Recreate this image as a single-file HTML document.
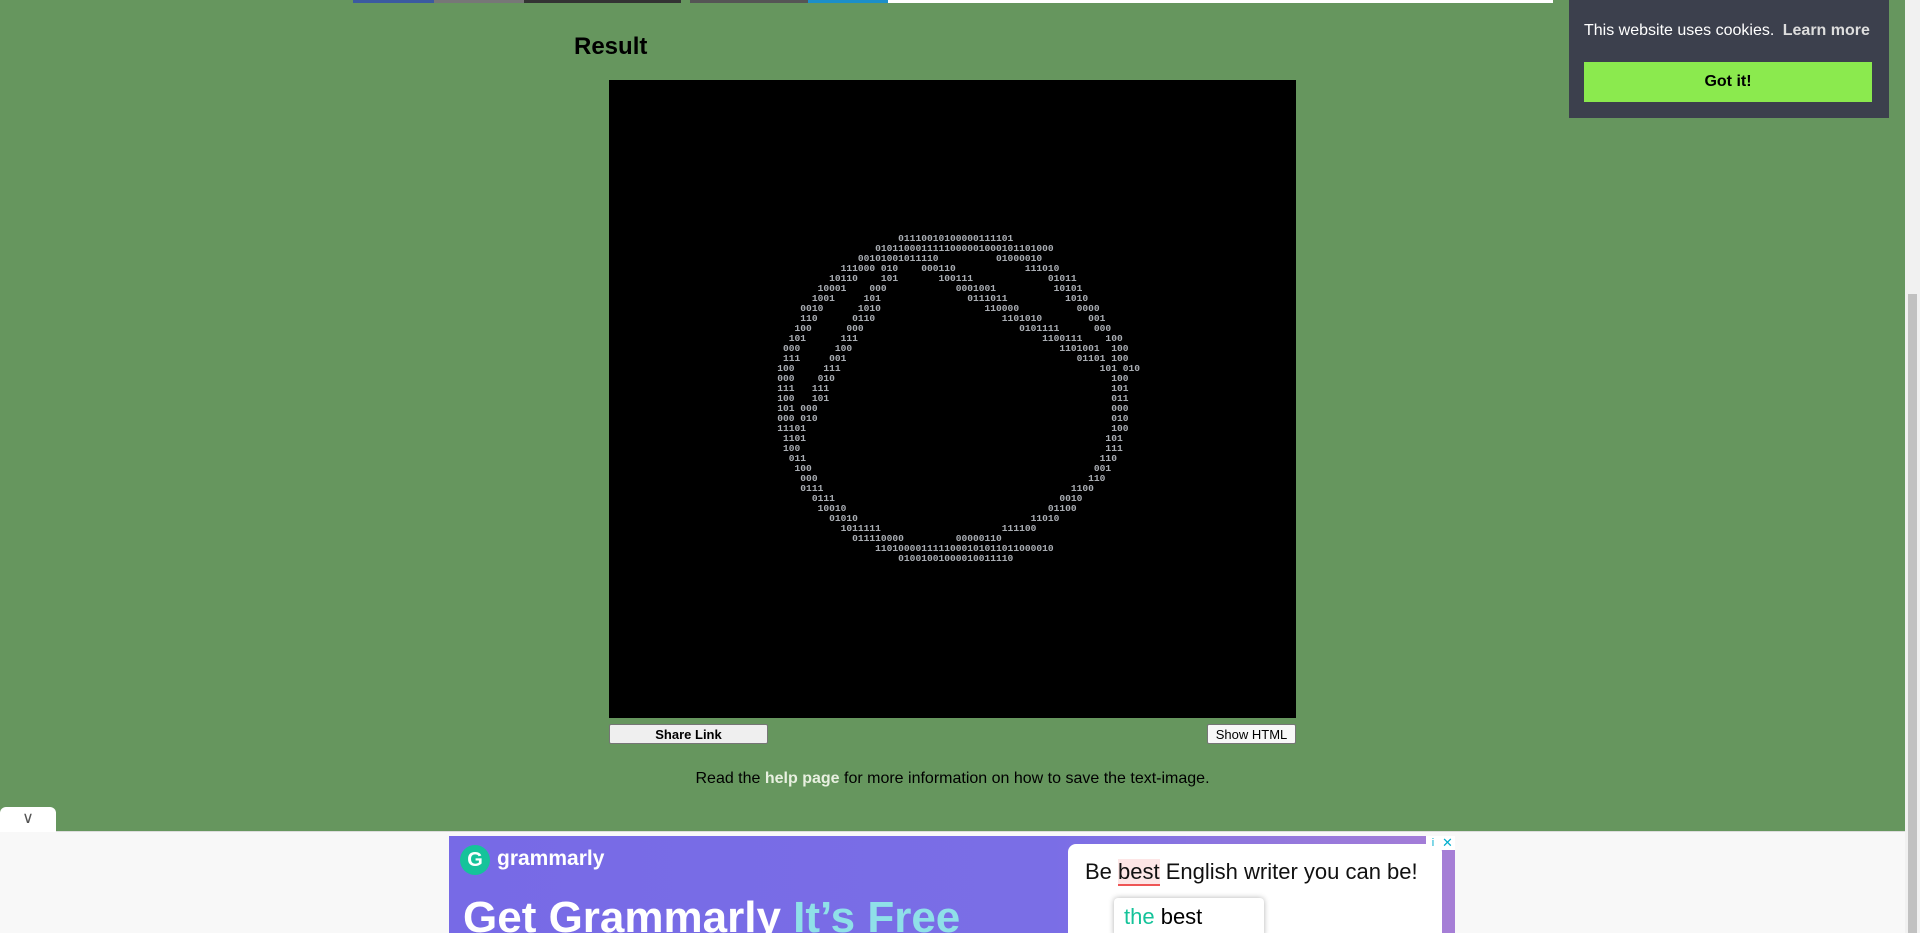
<!DOCTYPE html>
<html><head><meta charset="utf-8"><style>
*{margin:0;padding:0;box-sizing:border-box}
body{width:1920px;height:933px;overflow:hidden;background:#66965e;font-family:"Liberation Sans",Arial,sans-serif;position:relative}
.abs{position:absolute}
#ring{position:absolute;left:760px;top:234px;font:9.6px/10px "Liberation Mono",monospace;color:#a9adb3;font-weight:bold;white-space:pre;margin:0}
.btn{position:absolute;background:#efefef;border:1px solid #767676;border-radius:2px;font-size:13px;text-align:center;line-height:19px;color:#000}
</style></head><body>
<div class="abs" style="left:353px;top:0;width:81px;height:3px;background:#3b5aa0"></div>
<div class="abs" style="left:434px;top:0;width:90px;height:3px;background:#777"></div>
<div class="abs" style="left:524px;top:0;width:157px;height:3px;background:#333"></div>
<div class="abs" style="left:690px;top:0;width:118px;height:3px;background:#555"></div>
<div class="abs" style="left:808px;top:0;width:80px;height:3px;background:#1c8fc8"></div>
<div class="abs" style="left:888px;top:0;width:665px;height:3px;background:#fff"></div>

<div class="abs" style="left:574px;top:33px;font-size:24px;font-weight:bold;color:#000">Result</div>
<div class="abs" style="left:609px;top:80px;width:687px;height:638px;background:#000"></div>
<pre id="ring">                        01110010100000111101
                    0101100011111000001000101101000
                 00101001011110          01000010
              111000 010    000110            111010
            10110    101       100111             01011
          10001    000            0001001          10101
         1001     101               0111011          1010
       0010      1010                  110000          0000
       110      0110                      1101010        001
      100      000                           0101111      000
     101      111                                1100111    100
    000      100                                    1101001  100
    111     001                                        01101 100
   100     111                                             101 010
   000    010                                                100
   111   111                                                 101
   100   101                                                 011
   101 000                                                   000
   000 010                                                   010
   11101                                                     100
    1101                                                    101
    100                                                     111
     011                                                   110
      100                                                 001
       000                                               110
       0111                                           1100
         0111                                       0010
          10010                                   01100
            01010                              11010
              1011111                     111100
                011110000         00000110
                    1101000011111000101011011000010
                        01001001000010011110</pre>

<div class="btn" style="left:609px;top:724px;width:159px;height:20px;font-weight:bold">Share Link</div>
<div class="btn" style="left:1207px;top:724px;width:89px;height:20px;background:#f8f8f8">Show HTML</div>
<div class="abs" style="left:0;width:1905px;top:770px;text-align:center;font-size:16px;color:#000">Read the <b style="color:#e8f0e0">help page</b> for more information on how to save the text-image.</div>

<div class="abs" style="left:1569px;top:0;width:320px;height:118px;background:#3c404d"></div>
<div class="abs" style="left:1584px;top:22px;font-size:16px;color:#fff;white-space:nowrap">This website uses cookies. <b style="color:#ddd;margin-left:4px">Learn more</b></div>
<div class="abs" style="left:1584px;top:62px;width:288px;height:40px;background:#8bea4e;font-weight:bold;font-size:16px;text-align:center;line-height:40px;color:#000">Got it!</div>

<div class="abs" style="left:1905px;top:0;width:15px;height:933px;background:#f1f1f1"></div>
<div class="abs" style="left:1908px;top:294px;width:9px;height:639px;background:#c1c1c1"></div>

<div class="abs" style="left:0;top:831px;width:1905px;height:102px;background:#f8f8f8;border-top:1px solid #ddd"></div>
<div class="abs" style="left:0;top:807px;width:56px;height:25px;background:#fff;border-radius:6px 6px 0 0;text-align:center;color:#555;font-size:16px;line-height:24px">&#8744;</div>
<div class="abs" style="left:449px;top:836px;width:1006px;height:97px;background:linear-gradient(90deg,#776ae6 0%,#7a6ee6 60%,#a67ed6 100%);overflow:hidden">
 <div class="abs" style="left:11px;top:9px;width:30px;height:30px;border-radius:50%;background:#15c39a;color:#fff;font-weight:bold;font-size:20px;text-align:center;line-height:30px">G</div>
 <div class="abs" style="left:48px;top:11px;color:#fff;font-size:21px;font-weight:bold">grammarly</div>
 <div class="abs" style="left:14px;top:57px;color:#fff;font-size:44px;font-weight:bold;white-space:nowrap">Get Grammarly <span style="color:#8fe0e8">It’s Free</span></div>
 <div class="abs" style="left:619px;top:8px;width:374px;height:100px;background:#fff;border-radius:8px"></div>
 <div class="abs" style="left:636px;top:23px;font-size:22px;color:#111;white-space:nowrap">Be <span style="background:#fde6e6;border-bottom:2px solid #e55">best</span> English writer you can be!</div>
 <div class="abs" style="left:665px;top:62px;width:150px;height:40px;background:#fff;box-shadow:0 0 6px rgba(0,0,0,.3);border-radius:4px;font-size:22px;padding:6px 10px"><span style="color:#15c39a">the</span> best</div>
 <div class="abs" style="left:977px;top:0;width:14px;height:14px;background:#fff;color:#00aecd;font-size:11px;text-align:center;line-height:14px">i</div>
 <div class="abs" style="left:991px;top:0;width:15px;height:14px;background:#fff;color:#00aecd;font-size:13px;text-align:center;line-height:14px">✕</div>
</div>
</body></html>
